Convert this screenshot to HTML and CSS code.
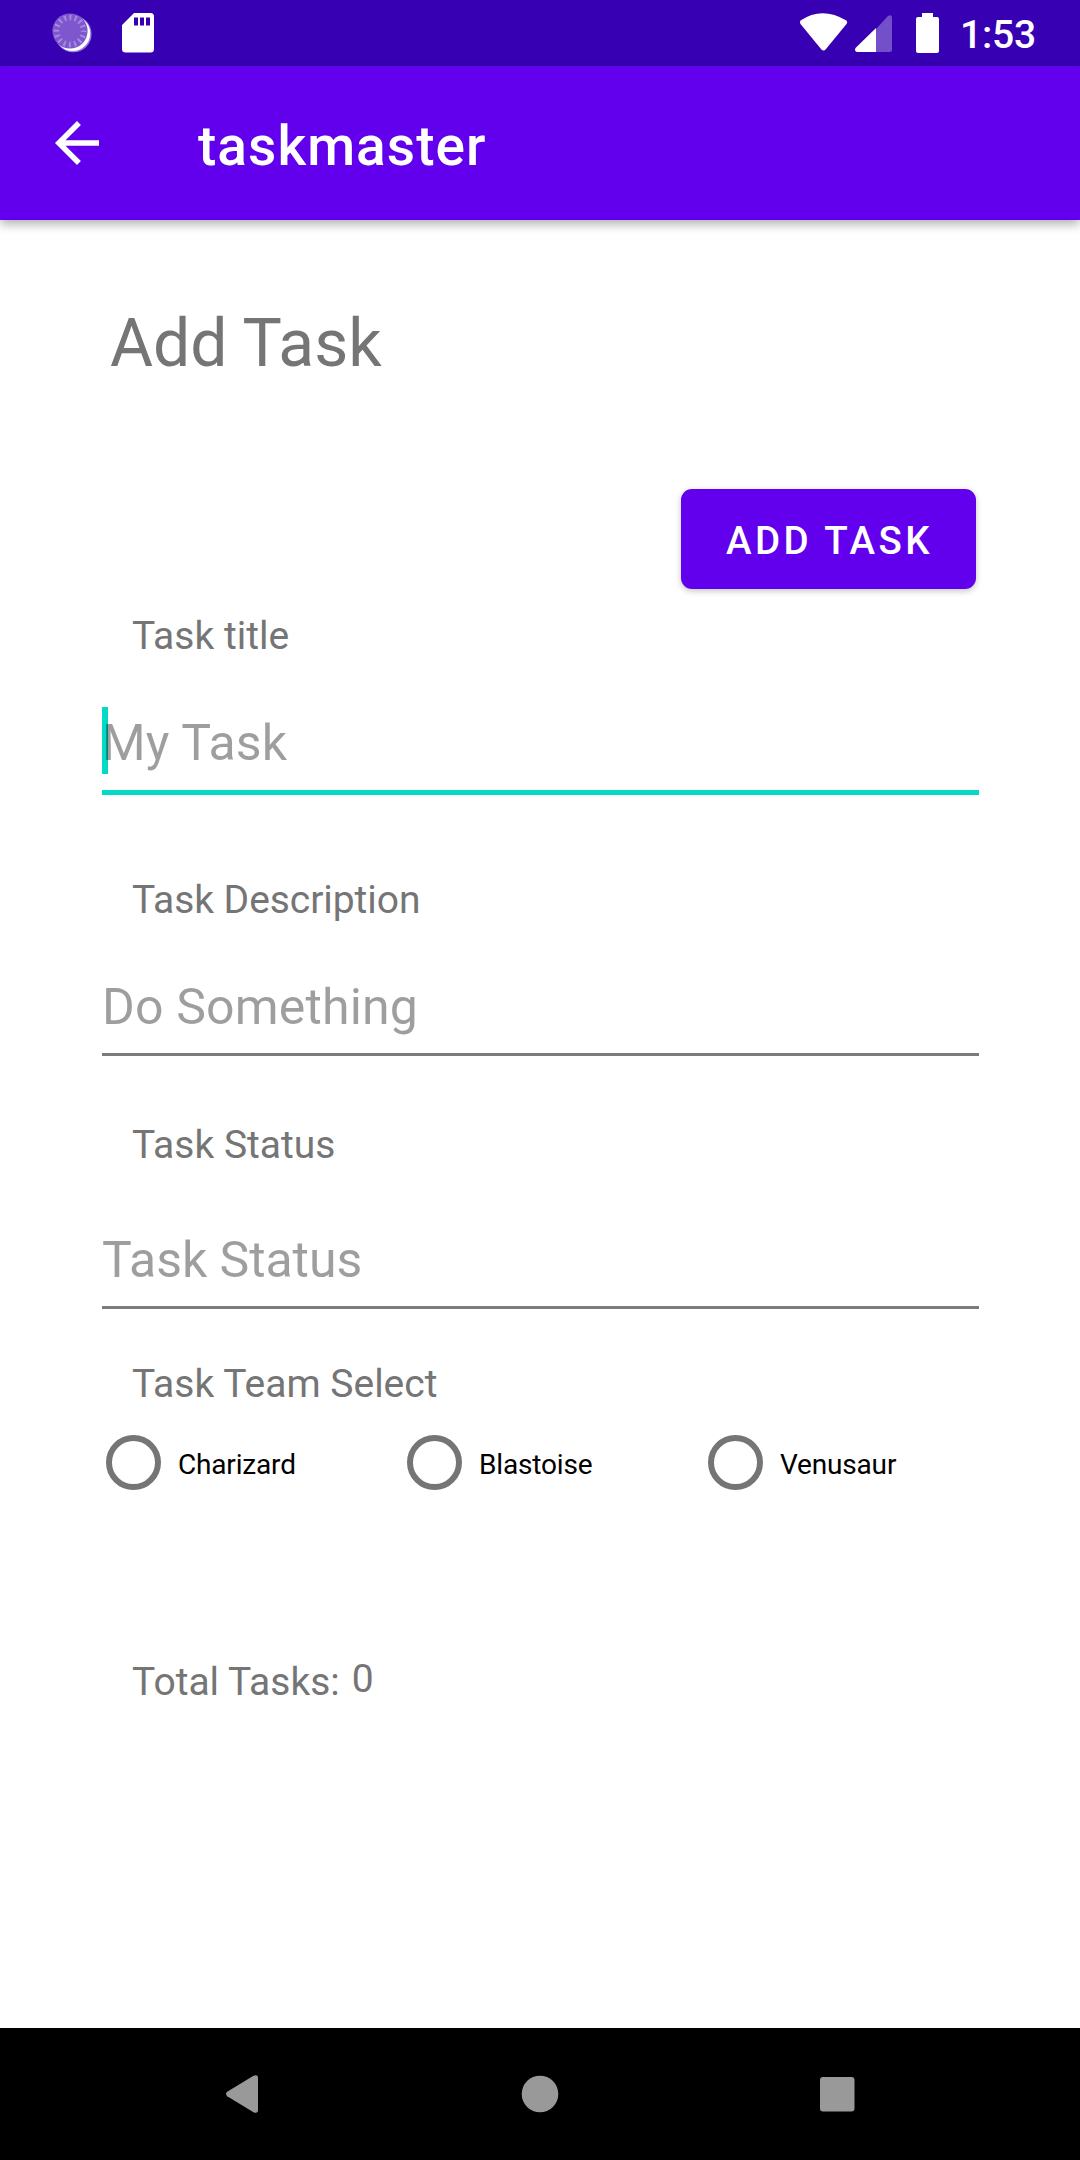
FILE: index.html
```html
<!DOCTYPE html>
<html lang="en">
<head>
<meta charset="utf-8">
<title>taskmaster</title>
<link rel="stylesheet" href="styles.css">
</head>
<body>
<div class="screen">
  <div class="status-bar">
    <svg class="notifications" width="160" height="66" viewBox="0 0 160 66">
      <circle cx="73.3" cy="34" r="18.3" fill="#fff" fill-opacity=".5"/>
      <circle cx="72.6" cy="33.4" r="17.6" fill="#fff"/>
      <circle cx="70" cy="31" r="17.6" fill="#7e57cf"/>
      <circle cx="70" cy="31" r="13.6" fill="none" stroke="#a58adb" stroke-width="5.6" stroke-dasharray="2 3.341" stroke-dashoffset="1"/>
      <path d="M134 13h16.500a3.500 3.500 0 0 1 3.500 3.500v32.500a3.500 3.500 0 0 1-3.500 3.500h-25a3.500 3.500 0 0 1-3.500-3.500v-24z" fill="#fff"/>
      <path d="M134 17.500h4v8h-4zM140 17.500h4v8h-4zM146 17.500h4v8h-4z" fill="#3700b3"/>
    </svg>
    <svg class="indicators" width="149" height="66" viewBox="796 0 149 66">
      <path d="M800.500 20.500Q822 5.800 846.500 20.500Q848 22 846.500 24L826 49Q823.500 52 821 49L800.500 24Q799.200 22 800.500 20.500z" fill="#fff"/>
      <path d="M876 29v23h13.500q2.500 0 2.500-2.500v-32.500q-1-3-4-1z" fill="#744fca"/>
      <path d="M876 28v24h-19q-3-1-1.500-4z" fill="#fff"/>
      <path d="M922 13h11v4h4q2 0 2 2v32q0 2-2 2h-19q-2 0-2-2v-32q0-2 2-2h4z" fill="#fff"/>
    </svg>
    <span class="clock">1:53</span>
  </div>

  <header class="app-bar">
    <svg class="back" width="44" height="44" viewBox="0 0 44 44"><path d="M44 19.200H10.500L25.900 3.900 22 0 0 22l22 22 3.900-3.900L10.500 24.800H44z" fill="#fff"/></svg>
    <span class="app-title">taskmaster</span>
  </header>

  <main class="form">
    <h1 class="heading">Add Task</h1>
    <button class="add-button">ADD TASK</button>

    <div class="label label-title">Task title</div>
    <div class="field field-active"><span class="caret"></span><span class="hint">My Task</span></div>

    <div class="label label-description">Task Description</div>
    <div class="field">Do Something</div>

    <div class="label label-status">Task Status</div>
    <div class="field field-status">Task Status</div>

    <div class="label label-team">Task Team Select</div>
    <div class="teams">
      <div class="team"><span class="radio"></span><span class="team-name">Charizard</span></div>
      <div class="team"><span class="radio"></span><span class="team-name">Blastoise</span></div>
      <div class="team"><span class="radio"></span><span class="team-name">Venusaur</span></div>
    </div>

    <div class="total"><span class="label">Total Tasks:</span><span class="label count">0</span></div>
  </main>

  <nav class="nav-bar">
    <svg width="1080" height="132" viewBox="0 2028 1080 132" fill="#999">
      <path d="M227.200 2091.800L253.500 2075.800Q258 2074 258 2078v32Q258 2114 253.500 2112.200L227.200 2096.200Q224.800 2094 227.200 2091.800z"/>
      <circle cx="540" cy="2094" r="18.300"/>
      <rect x="820" y="2077" width="34.500" height="34.500" rx="3"/>
    </svg>
  </nav>
</div>
</body>
</html>
```
FILE: styles.css
```css
* { box-sizing: border-box; }
body { margin: 0; background: #fff; font-family: Roboto, sans-serif; }
.screen { width: 1080px; height: 2160px; display: flex; flex-direction: column; overflow: hidden; }
svg { display: block; }

.status-bar { height: 66px; flex: none; background: #3700b3; display: flex; }
.indicators { margin-left: 636px; }
.clock { margin-left: 15px; padding-top: 10px; font-size: 39px; line-height: 50px; font-weight: 500; letter-spacing: -.2px; color: #fff; }

.app-bar {
  height: 154px; flex: none; display: flex; align-items: center;
  padding-left: 55px; background: #6200ee; color: #fff;
  box-shadow: 0 4px 10px rgba(0, 0, 0, .32);
}
.app-title { margin-left: 99px; margin-top: 6px; font-size: 55px; line-height: 66px; font-weight: 500; letter-spacing: 1.05px; }

.form { flex: 1; padding: 79px 101px 0 102px; display: flex; flex-direction: column; }
.heading { margin: 0 0 0 8px; font-size: 66px; line-height: 90px; font-weight: 400; color: #757575; }
.add-button {
  align-self: flex-end; width: 295px; height: 100px; margin: 100px 3px 0 0; padding: 3px 0 0 2px;
  border: 0; border-radius: 11px; background: #6200ee; color: #fff;
  font: 500 38.5px/50px Roboto, sans-serif; letter-spacing: 3.44px;
  box-shadow: 0 2px 6px rgba(0, 0, 0, .24);
}
.label { margin-left: 30px; font-size: 39px; line-height: 52px; color: #757575; }
.label-title { margin-top: 21px; }
.label-description { margin-top: 79px; letter-spacing: -.06px; }
.label-status { margin-top: 63px; }
.label-team { margin-top: 49px; }

.field {
  position: relative; margin-top: 48px; padding-bottom: 13px;
  border-bottom: 3px solid #7b7b7b;
  font-size: 50px; line-height: 66px; letter-spacing: .16px; color: rgba(0, 0, 0, .38);
}
.field-active { padding-bottom: 14px; border-bottom: 5px solid #03dac5; }
.field-status { margin-top: 56px; letter-spacing: -.06px; }
.caret { position: absolute; left: 0; top: -3px; width: 6px; height: 67px; background: #03dac5; }
.hint { position: relative; }

.teams { display: flex; margin-top: 25px; }
.team {
  width: 301px; height: 55px; padding-left: 4.4px; flex: none; display: flex; align-items: center; gap: 16.6px;
  font-size: 28px; line-height: 36px; letter-spacing: -.17px; color: #000;
}
.team:last-child { width: auto; }
.team-name { padding-top: 5px; }
.radio { width: 55px; height: 55px; border: 6px solid #757575; border-radius: 50%; }

.total { display: flex; margin-top: 166px; }
.count { margin-left: 12px; margin-top: -3px; }

.nav-bar { height: 132px; flex: none; background: #000; }
```
